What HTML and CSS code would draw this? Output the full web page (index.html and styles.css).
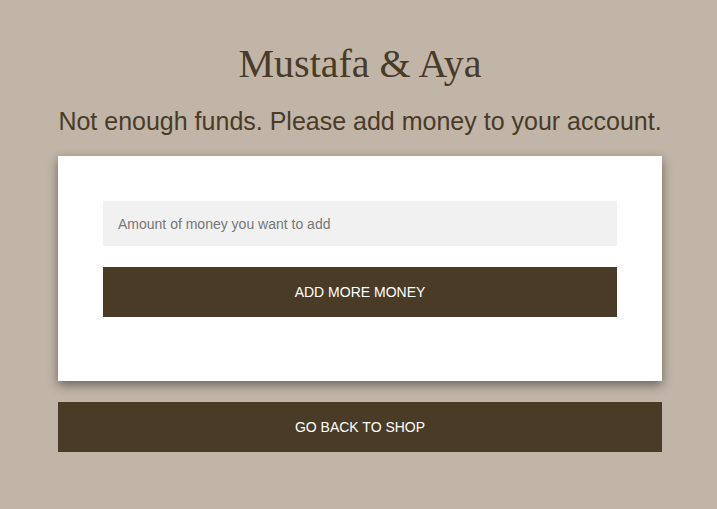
FILE: index.html
```html
<!DOCTYPE html>
<html>
<head>
<meta charset="utf-8">
<link rel="stylesheet" href="styles.css">
</head>
<body>
<main class="page">
  <h1 class="title">Mustafa &amp; Aya</h1>
  <p class="message">Not enough funds. Please add money to your account.</p>
  <form class="card">
    <input class="amount" type="text" placeholder="Amount of money you want to add">
    <button class="btn" type="button">ADD MORE MONEY</button>
  </form>
  <button class="btn back" type="button">GO BACK TO SHOP</button>
</main>
</body>
</html>
```
FILE: styles.css
```css
html, body {
  margin: 0;
  padding: 0;
  background: #c0b5a7;
}
body {
  font-family: "Liberation Sans", Arial, sans-serif;
  color: #4a3b28;
}
.page {
  width: 604px;
  margin-left: 58px;
  display: flex;
  flex-direction: column;
}
.title {
  font-family: "Liberation Serif", "Times New Roman", serif;
  font-weight: normal;
  font-size: 40px;
  line-height: 46px;
  text-align: center;
  margin: 41px 0 0 0;
  color: #4a3b28;
}
.message {
  font-size: 25px;
  line-height: 28px;
  text-align: center;
  margin: 20px -10px 0 -10px;
  white-space: nowrap;
}
.card {
  background: #fff;
  margin: 21px 0 0 0;
  padding: 45px 45px 64px;
  display: flex;
  flex-direction: column;
  gap: 21px;
  box-shadow: 0 4px 10px rgba(0, 0, 0, 0.45);
}
.amount {
  height: 45px;
  box-sizing: border-box;
  border: none;
  background: #f1f1f1;
  padding: 0 15px;
  font-family: "Liberation Sans", Arial, sans-serif;
  font-size: 14px;
  color: #333;
  outline: none;
}
.amount::placeholder {
  color: #767676;
}
.btn {
  height: 50px;
  border: none;
  background: #4a3b26;
  color: #fff;
  font-family: "Liberation Sans", Arial, sans-serif;
  font-size: 14px;
  text-transform: uppercase;
  cursor: pointer;
}
.back {
  margin-top: 21px;
}
```
